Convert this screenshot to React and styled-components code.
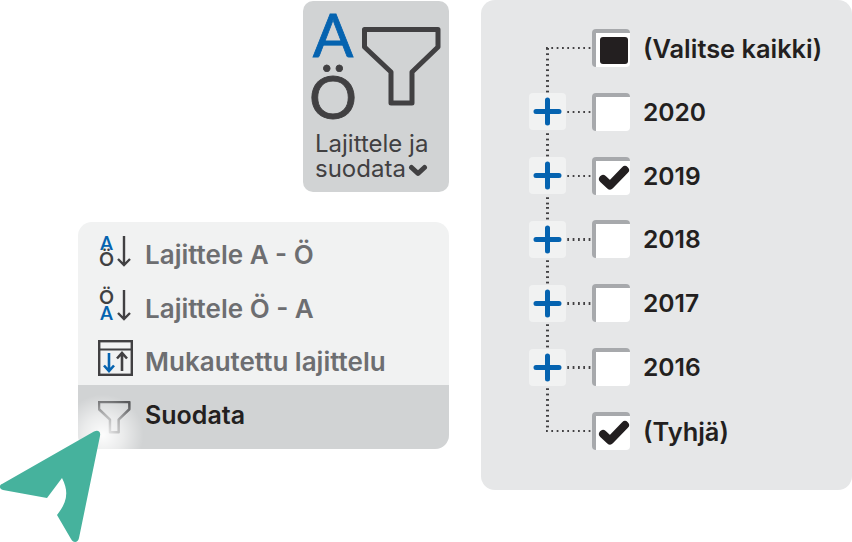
import React from "react";
import styled, { createGlobalStyle } from "styled-components";

const GlobalStyle = createGlobalStyle`
  html, body { margin: 0; padding: 0; background: #fff; }
  body { font-family: Inter, "Open Sans", sans-serif; overflow: hidden; }
`;

const Page = styled.div`
  position: relative;
  display: flex;
  width: 852px;
  height: 542px;
  overflow: hidden;
`;

const LeftColumn = styled.div`
  display: flex;
  flex-direction: column;
  align-items: flex-end;
  width: 449px;
  padding-top: 1px;
  gap: 30px;
`;

/* ribbon button */
const RibbonButton = styled.div`
  box-sizing: border-box;
  width: 146px;
  height: 191px;
  padding: 2px 0 0 12px;
  background: #d1d3d4;
  border-radius: 10px;
  color: #414042;
`;

const RibbonIcons = styled.div`
  display: flex;
  height: 120px;
  margin-left: -5px;
`;

const BigLetters = styled.div`
  display: flex;
  flex-direction: column;
  align-items: center;
  width: 46px;
  margin-right: 6px;
  font-family: Lato, Inter, sans-serif;
  font-size: 60px;
  font-weight: 400;
  line-height: 62px;
  -webkit-text-stroke: 0.8px currentColor;
`;

const BlueLetter = styled.span`
  color: #0563b0;
`;

const FunnelSlot = styled.div`
  margin-top: 24px;
`;

const RibbonLabel = styled.div`
  margin-top: 8px;
  font-size: 24px;
  line-height: 25px;
  font-weight: 400;
  white-space: nowrap;
`;

const LabelLine = styled.div`
  display: flex;
  align-items: center;
  gap: 2px;
`;

const Chevron = styled.svg`
  margin-top: 3px;
`;

/* sort menu */
const Menu = styled.div`
  box-sizing: border-box;
  width: 371px;
  height: 227px;
  padding-top: 2px;
  background: #f1f2f2;
  border-radius: 14px;
  overflow: hidden;
`;

const MenuItem = styled.div`
  display: flex;
  align-items: ${(p) => (p.$active ? "flex-start" : "center")};
  box-sizing: border-box;
  height: ${(p) => (p.$active ? "64px" : "53.7px")};
  padding: ${(p) => (p.$active ? "14px" : "0")} 0 0 20px;
  background: ${(p) => (p.$active ? "#d1d3d4" : "transparent")};
  color: ${(p) => (p.$active ? "#231f20" : "#6d6e71")};
  font-size: ${(p) => (p.$active ? "25px" : "26px")};
  font-weight: 600;
  line-height: 32px;
`;

const MenuText = styled.span`
  padding-top: ${(p) => (p.$active ? "0" : "8px")};
  white-space: nowrap;
`;

const MenuIcon = styled.div`
  display: flex;
  align-items: center;
  justify-content: flex-start;
  width: 47px;
  height: 36px;
  flex: none;
`;

const SmallLetters = styled.div`
  display: flex;
  flex-direction: column;
  align-items: center;
  width: 17px;
  margin-right: 2px;
  font-family: Lato, Inter, sans-serif;
  font-size: 18px;
  line-height: 16px;
  font-weight: 700;
  color: #414042;
`;

/* tree panel */
const TreePanel = styled.div`
  box-sizing: border-box;
  width: 371px;
  height: 490px;
  margin-left: 32px;
  padding: 16px 0 0 48px;
  background: #e6e7e8;
  border-radius: 14px;
`;

const TreeRow = styled.div`
  display: flex;
  align-items: center;
  height: 63.83px;
`;

const Rail = styled.div`
  position: relative;
  display: flex;
  align-items: center;
  flex: none;
  width: 63px;
  height: 100%;

  &::before {
    content: "";
    position: absolute;
    left: 17px;
    width: 2.5px;
    top: ${(p) => (p.$pos === "first" ? "50%" : "0")};
    bottom: ${(p) => (p.$pos === "last" ? "50%" : "0")};
    background: linear-gradient(to bottom, #414042 2px, transparent 2px) 0 0 / 2.5px 5.33px;
  }

  &::after {
    content: "";
    position: absolute;
    left: 17px;
    right: 0;
    top: calc(50% - 1px);
    height: 2.5px;
    background: linear-gradient(to right, #414042 2px, transparent 2px) 0 0 / 5.33px 2.5px;
  }
`;

const PlusBox = styled.div`
  position: relative;
  z-index: 1;
  display: flex;
  align-items: center;
  justify-content: center;
  width: 37px;
  height: 37px;
  background: #f1f2f2;
  border-radius: 4px;
`;

const CheckBox = styled.div`
  display: flex;
  align-items: center;
  justify-content: center;
  box-sizing: border-box;
  width: 38px;
  height: 38px;
  flex: none;
  padding: 1px 0 0 1px;
  background: #fff;
  border-top: 4px solid #a7a9ac;
  border-left: 4px solid #a7a9ac;
  border-radius: 4px;
`;

const FilledMark = styled.div`
  width: 28px;
  height: 27px;
  background: #231f20;
  border-radius: 3px;
`;

const TreeLabel = styled.span`
  margin-left: 13px;
  padding-top: ${(p) => (p.$year ? "0" : "2px")};
  font-size: ${(p) => (p.$year ? "24.6px" : "25.4px")};
  font-weight: 600;
  color: #231f20;
  white-space: nowrap;
`;

const CursorGlow = styled.div`
  position: absolute;
  left: 62px;
  top: 394px;
  width: 82px;
  height: 82px;
  background: radial-gradient(circle, rgba(255, 255, 255, 0.95) 0%, rgba(255, 255, 255, 0.55) 35%, rgba(255, 255, 255, 0) 70%);
`;

const CursorArrow = styled.svg`
  position: absolute;
  left: 0;
  top: 428px;
`;

const Funnel = ({ size = 80, color = "#414042", stroke = 5 }) => (
  <svg width={size} height={size} viewBox="0 0 80 80" fill="none">
    <path
      d="M2.500 2.500H76V20L50 45V76H29V45L2.500 20Z"
      stroke={color}
      strokeWidth={stroke}
      strokeLinejoin="round"
    />
  </svg>
);

const DownArrow = () => (
  <svg width="14" height="32" viewBox="0 0 14 32" fill="none" stroke="#414042" strokeWidth="2.4">
    <path d="M7 1V30M1 24L7 30L13 24" />
  </svg>
);

const CustomSortIcon = () => (
  <svg width="35" height="36" viewBox="0 0 35 36" fill="none">
    <rect x="1.200" y="1.200" width="32.600" height="33.600" stroke="#414042" strokeWidth="2.400" />
    <path d="M1 9.500H34" stroke="#414042" strokeWidth="2" />
    <path d="M11 13V31M6 25.500L11 31L16 25.500" stroke="#0563b0" strokeWidth="2.600" />
    <path d="M24 31V13M19 18.500L24 13L29 18.500" stroke="#414042" strokeWidth="2.600" />
  </svg>
);

const Plus = () => (
  <svg width="29" height="29" viewBox="0 0 29 29" fill="none" stroke="#0563b0" strokeWidth="5" strokeLinecap="round">
    <path d="M3 14.500H26M14.500 3V26" />
  </svg>
);

const Check = () => (
  <svg width="32" height="26" viewBox="0 0 32 26" fill="none" stroke="#231f20" strokeWidth="8" strokeLinecap="round" strokeLinejoin="round">
    <path d="M5 14L12 20.500L27 5" />
  </svg>
);

const years = [
  { label: "(Valitse kaikki)", mark: "filled", pos: "first" },
  { label: "2020", plus: true },
  { label: "2019", plus: true, mark: "check" },
  { label: "2018", plus: true },
  { label: "2017", plus: true },
  { label: "2016", plus: true },
  { label: "(Tyhjä)", mark: "check", pos: "last" },
];

export default function App() {
  return (
    <Page>
      <GlobalStyle />
      <LeftColumn>
        <RibbonButton>
          <RibbonIcons>
            <BigLetters>
              <BlueLetter>A</BlueLetter>
              <span>Ö</span>
            </BigLetters>
            <FunnelSlot>
              <Funnel />
            </FunnelSlot>
          </RibbonIcons>
          <RibbonLabel>
            <div>Lajittele ja</div>
            <LabelLine>
              suodata
              <Chevron width="20" height="13" viewBox="0 0 20 13" fill="none" stroke="#414042" strokeWidth="5" strokeLinecap="round" strokeLinejoin="round">
                <path d="M3.500 3.500L10 9.500L16.500 3.500" />
              </Chevron>
            </LabelLine>
          </RibbonLabel>
        </RibbonButton>
        <Menu>
          <MenuItem>
            <MenuIcon>
              <SmallLetters>
                <BlueLetter>A</BlueLetter>
                <span>Ö</span>
              </SmallLetters>
              <DownArrow />
            </MenuIcon>
            <MenuText>Lajittele A - Ö</MenuText>
          </MenuItem>
          <MenuItem>
            <MenuIcon>
              <SmallLetters>
                <span>Ö</span>
                <BlueLetter>A</BlueLetter>
              </SmallLetters>
              <DownArrow />
            </MenuIcon>
            <MenuText>Lajittele Ö - A</MenuText>
          </MenuItem>
          <MenuItem>
            <MenuIcon>
              <CustomSortIcon />
            </MenuIcon>
            <MenuText>Mukautettu lajittelu</MenuText>
          </MenuItem>
          <MenuItem $active>
            <MenuIcon>
              <Funnel size={33} color="#58595b" stroke={6} />
            </MenuIcon>
            <MenuText $active>Suodata</MenuText>
          </MenuItem>
        </Menu>
      </LeftColumn>
      <TreePanel>
        {years.map((y) => (
          <TreeRow key={y.label}>
            <Rail $pos={y.pos}>{y.plus && <PlusBox><Plus /></PlusBox>}</Rail>
            <CheckBox>
              {y.mark === "filled" && <FilledMark />}
              {y.mark === "check" && <Check />}
            </CheckBox>
            <TreeLabel $year={y.plus}>{y.label}</TreeLabel>
          </TreeRow>
        ))}
      </TreePanel>
      <CursorGlow />
      <CursorArrow width="105" height="114" viewBox="0 0 105 114" fill="#46b29d">
        <path d="M94 3.500C98 1.500 101 3.500 100 8L79 110C78 115 73 115 71 111L57 87C64 78 71 67 62 50L47 70L3 62C-1 61 -1 57 2 56Z" />
      </CursorArrow>
    </Page>
  );
}
